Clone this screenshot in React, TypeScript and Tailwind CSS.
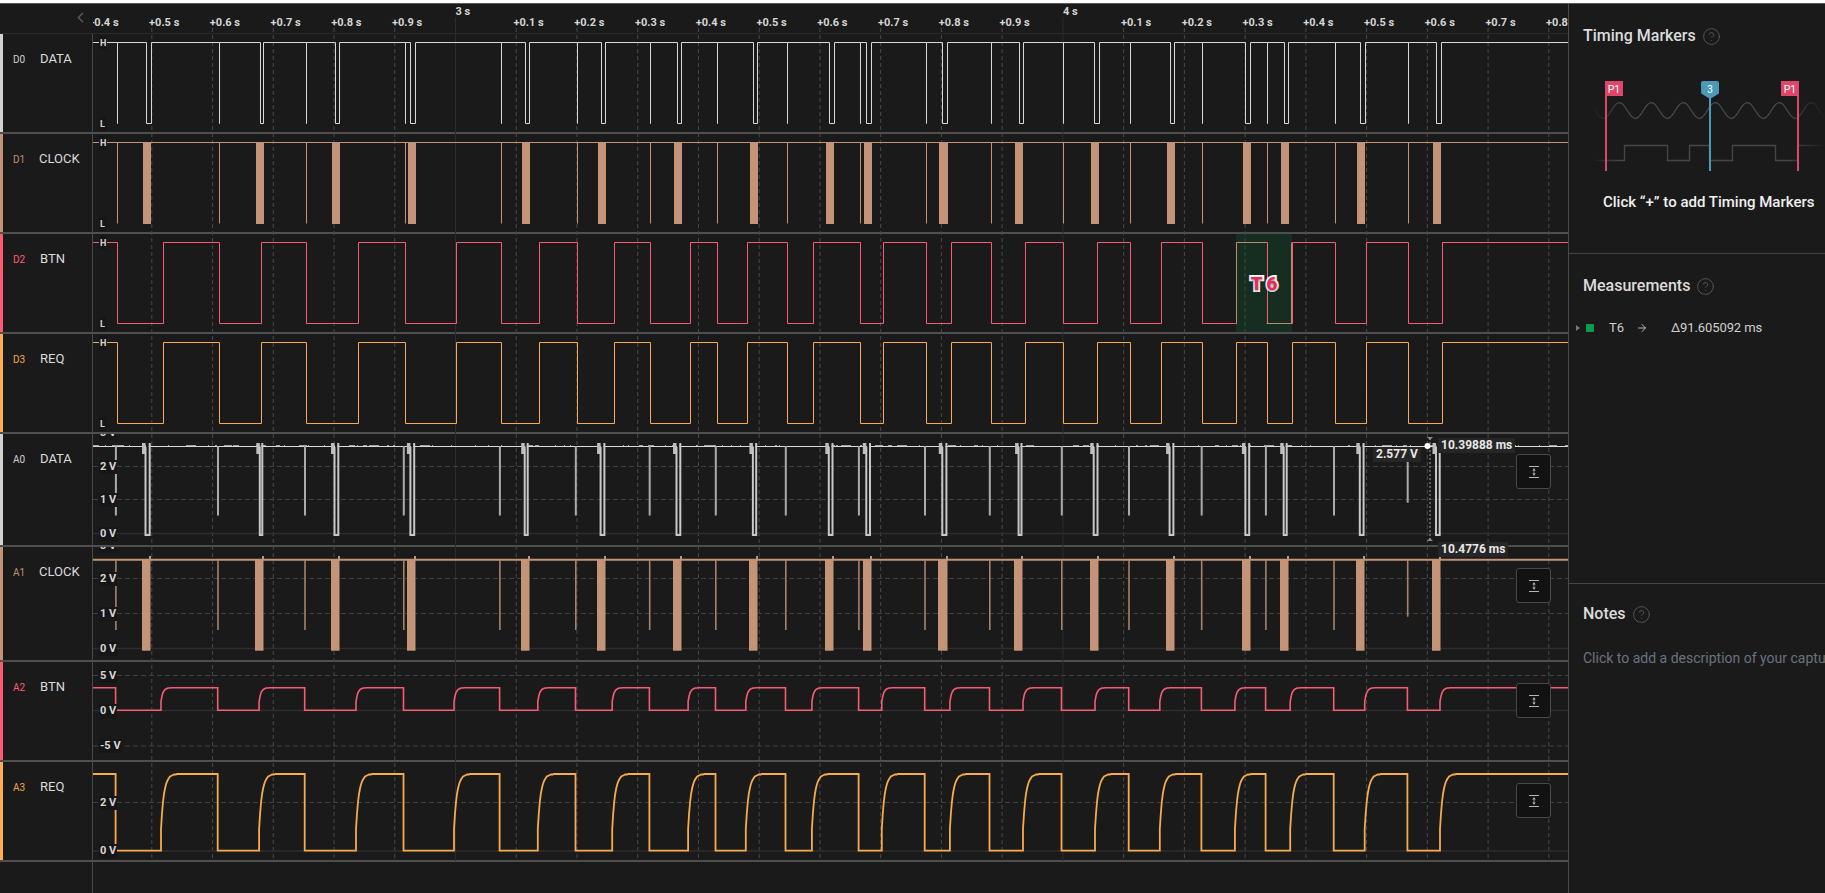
import type { ReactNode } from 'react';
import { ChevronLeft, CircleHelp, ArrowRight } from 'lucide-react';

// everything below is in page pixels, the row svgs use a viewBox that keeps them that way
const CHART_LEFT = 93;
const CHART_WIDTH = 1475;
const CHART_RIGHT = CHART_LEFT + CHART_WIDTH;

// BTN / REQ edges, alternating fall, rise
const EDGES = [
  116.6, 162.5, 218.7, 260.6, 305.7, 357.5, 404.5, 455.5, 500.6, 539.3, 576.5, 613.7, 650.4, 689.6, 716.5, 747.3,
  786.5, 813.4, 859.6, 883.3, 925.7, 951.4, 990.5, 1024.5, 1062.5, 1096.5, 1129.7, 1161.3, 1202.4, 1236.4, 1266.6,
  1291.7, 1334.7, 1366.2, 1408.4, 1441.5,
];
const THIN = EDGES.filter((_, i) => i % 2 === 0);
const PULSES: [number, number][] = [
  [145.5, 150.7], [259.8, 263.3], [334.5, 339.3], [410.4, 415.2], [524.7, 528.7], [600.6, 605.4], [676.5, 681.3],
  [752.9, 757.2], [828.8, 833.5], [866.3, 871], [942.3, 947.4], [1018.6, 1022.5], [1093.7, 1098.5], [1169.6, 1174.4],
  [1245.4, 1250.2], [1283.7, 1287.7], [1359.8, 1364.6], [1436, 1440.7],
];
const BARS: [number, number][] = [
  [143, 151], [256, 264], [332, 340], [408, 416], [522, 530], [598, 606], [674, 682], [750, 758], [826, 834],
  [864, 872], [939, 948], [1015, 1023], [1091, 1099], [1167, 1175], [1243, 1251], [1281, 1289], [1357, 1365], [1433, 1441],
];

const snap = (x: number) => Math.round(x) + 0.5;

function dataPath(hi: number, lo: number) {
  const events = [
    ...THIN.map((x) => ({ a: snap(x), b: snap(x) })),
    ...PULSES.map(([a, b]) => ({ a: snap(a), b: snap(b) })),
  ].sort((p, q) => p.a - q.a);
  let d = `M${CHART_LEFT} ${hi}`;
  for (const e of events) d += `L${e.a} ${hi}L${e.a} ${lo}L${e.b} ${lo}L${e.b} ${hi}`;
  return d + `L${CHART_RIGHT} ${hi}`;
}

function squarePath(hi: number, lo: number) {
  let d = `M${CHART_LEFT} ${hi}`;
  EDGES.forEach((x, i) => {
    const s = snap(x);
    d += i % 2 === 0 ? `L${s} ${hi}L${s} ${lo}` : `L${s} ${lo}L${s} ${hi}`;
  });
  return d + `L${CHART_RIGHT} ${hi}`;
}

function analogPath(hi: number, lo: number, tau: number, len: number) {
  let d = `M${CHART_LEFT} ${hi}`;
  EDGES.forEach((x, i) => {
    if (i % 2 === 0) {
      d += `L${x - 1} ${hi}L${x - 1} ${lo}`;
    } else {
      const r = x - 1.5;
      d += `L${r} ${lo}`;
      for (let dx = 0; dx <= len; dx++) {
        const y = Math.round((lo + (hi - lo) * (1 - Math.exp(-(dx + 1) / tau))) * 2) / 2;
        d += `L${r + dx} ${y}`;
      }
      d += `L${r + len + 1} ${hi}`;
    }
  });
  return d + `L${CHART_RIGHT} ${hi}`;
}

function noise(y: number) {
  let d = '';
  let x = CHART_LEFT;
  let seed = 7;
  while (x < CHART_RIGHT) {
    seed = (seed * 137 + 31) % 251;
    const len = 1 + (seed % 5);
    if (seed % 3 === 0) d += `M${x} ${y}h${len * 2}`;
    else if (seed % 3 === 1) d += `M${x} ${y}h1`;
    x += len + 3 + (seed % 7);
  }
  return d;
}

function HLine({ y, solid }: { y: number; solid?: boolean }) {
  return (
    <line
      x1={CHART_LEFT}
      x2={CHART_RIGHT}
      y1={y}
      y2={y}
      stroke={solid ? '#2e2e2e' : '#404040'}
      strokeWidth={solid ? 1.5 : 1}
      strokeDasharray={solid ? undefined : '5 3'}
    />
  );
}

const A0Trace = (
  <>
    <HLine y={466.5} />
    <HLine y={499.5} />
    <HLine y={533.5} solid />
    <path d={noise(445.5)} stroke="#a0a0a0" strokeWidth={1} fill="none" />
    <line x1={CHART_LEFT} x2={CHART_RIGHT} y1={446.5} y2={446.5} stroke="#dcdcdc" strokeWidth={1} />
    {THIN.map((x) => (
      <line key={x} x1={x - 0.7} x2={x - 0.7} y1={446} y2={Math.round(x) === 1408 ? 502.7 : 515.5} stroke="#ababab" strokeWidth={2} />
    ))}
    {PULSES.map(([a, b]) => (
      <g key={a}>
        <rect x={a + 0.5} y={444} width={b - a - 2.5} height={5} fill="#1a1a1a" />
        <rect x={a - 3.5} y={443} width={3.5} height={11} fill="#bdbdbd" />
        <path d={`M${a} 447V535H${b - 1}V443`} stroke="#c8c8c8" strokeWidth={2} fill="none" />
      </g>
    ))}
  </>
);

const A1Trace = (
  <>
    <HLine y={578.5} />
    <HLine y={613.5} />
    <HLine y={648.5} solid />
    <line x1={CHART_LEFT} x2={CHART_RIGHT} y1={559.7} y2={559.7} stroke="#c39478" strokeWidth={2} />
    {THIN.map((x) => (
      <line key={x} x1={x - 0.7} x2={x - 0.7} y1={560} y2={Math.round(x) === 1408 ? 616.7 : 630} stroke="#a5836d" strokeWidth={1.6} />
    ))}
    {BARS.map(([a, b]) => (
      <g key={a}>
        <rect x={a - 1} y={560} width={b - a + 0.5} height={90.7} fill="#c39478" />
        <rect x={b - 2} y={556} width={2} height={4} fill="#c39478" />
      </g>
    ))}
  </>
);

type Row = {
  id: string;
  name: string;
  nameClass?: string;
  top: number;
  h: number;
  rowClass: string;
  strip: string;
  idColor: string;
  axis: { t: string; y: number }[];
  trace: ReactNode;
  scaleBtn?: string;
};

const digitalAxis = (top: number) => [
  { t: 'H', y: top + 8.5 },
  { t: 'L', y: top + 90 },
];

const ROWS: Row[] = [
  {
    id: 'D0', name: 'DATA', top: 34, h: 98, rowClass: 'h-[100px]', strip: 'bg-[#d2d2d2]', idColor: 'text-[#cfcfcf]',
    axis: digitalAxis(34),
    trace: <path d={dataPath(42.5, 123.5)} stroke="#d8d8d8" fill="none" />,
  },
  {
    id: 'D1', name: 'CLOCK', nameClass: '-ml-px', top: 134, h: 98, rowClass: 'h-[100px]', strip: 'bg-[#c39478]', idColor: 'text-[#c08f72]',
    axis: digitalAxis(134),
    trace: (
      <>
        <path d={THIN.map((x) => `M${snap(x)} 142V223.5`).join('')} stroke="#c39478" fill="none" />
        <line x1={CHART_LEFT} x2={CHART_RIGHT} y1={142.5} y2={142.5} stroke="#c39478" />
        {BARS.map(([a, b]) => (
          <rect key={a} x={a} y={142} width={b - a} height={82} fill="#c39478" />
        ))}
      </>
    ),
  },
  {
    id: 'D2', name: 'BTN', top: 234, h: 98, rowClass: 'h-[100px]', strip: 'bg-[#ff5a72]', idColor: 'text-[#ff5a72]',
    axis: digitalAxis(234),
    trace: (
      <>
        <rect x={1236} y={234} width={56} height={98} fill="#105635" fillOpacity={0.32} />
        <path d={squarePath(242.5, 323.5)} stroke="#f75c73" fill="none" />
        {/* trace takes the marker's tint along the T6 span */}
        <path d="M1236.5 323.500V242.500H1266.500M1266.500 323.500H1291.500V242.500" stroke="#bd8a73" fill="none" />
      </>
    ),
  },
  {
    id: 'D3', name: 'REQ', top: 334, h: 98, rowClass: 'h-[100px]', strip: 'bg-[#ffad4d]', idColor: 'text-[#f0a64c]',
    axis: digitalAxis(334),
    trace: <path d={squarePath(342.5, 423.5)} stroke="#f8aa4c" fill="none" />,
  },
  {
    id: 'A0', name: 'DATA', top: 434, h: 111, rowClass: 'h-[113px]', strip: 'bg-[#d2d2d2]', idColor: 'text-[#cfcfcf]',
    axis: [
      { t: '3 V', y: 433 },
      { t: '2 V', y: 466.5 },
      { t: '1 V', y: 499.5 },
      { t: '0 V', y: 533.5 },
    ],
    trace: A0Trace,
    scaleBtn: 'top-[20px]',
  },
  {
    id: 'A1', name: 'CLOCK', nameClass: '-ml-px', top: 547, h: 113, rowClass: 'h-[115px]', strip: 'bg-[#c39478]', idColor: 'text-[#c08f72]',
    axis: [
      { t: '3 V', y: 546 },
      { t: '2 V', y: 579 },
      { t: '1 V', y: 613.5 },
      { t: '0 V', y: 648.5 },
    ],
    trace: A1Trace,
    scaleBtn: 'top-[21px]',
  },
  {
    id: 'A2', name: 'BTN', top: 662, h: 98, rowClass: 'h-[100px]', strip: 'bg-[#ff5a72]', idColor: 'text-[#ff5a72]',
    axis: [
      { t: '5 V', y: 675.5 },
      { t: '0 V', y: 710.5 },
      { t: '-5 V', y: 746 },
    ],
    trace: (
      <>
        <HLine y={675.5} />
        <HLine y={710.5} solid />
        <HLine y={746} />
        <path d={analogPath(687.7, 710.3, 2, 9)} stroke="#f75c73" strokeWidth={1.6} fill="none" />
      </>
    ),
    scaleBtn: 'top-[21px]',
  },
  {
    id: 'A3', name: 'REQ', top: 762, h: 98, rowClass: 'h-[100px]', strip: 'bg-[#ffad4d]', idColor: 'text-[#f0a64c]',
    axis: [
      { t: '2 V', y: 802.5 },
      { t: '0 V', y: 851 },
    ],
    trace: (
      <>
        <HLine y={802.5} />
        <HLine y={851} solid />
        <path d={analogPath(774, 850.7, 3, 15)} stroke="#f8aa4c" strokeWidth={1.8} fill="none" />
      </>
    ),
    scaleBtn: 'top-[21px]',
  },
];

const TICKS = Array.from({ length: 25 }, (_, i) => {
  const x = 455.5 + 60.74 * (i - 6);
  const tenth = (i + 4) % 10;
  return { i, x, whole: tenth === 0, label: tenth === 0 ? `${Math.round(2.4 + i / 10)} s` : `+0.${tenth} s` };
});

function ScaleButton({ top }: { top: string }) {
  return (
    <div className={`absolute right-[17px] ${top} flex h-[35px] w-[35px] items-center justify-center rounded-[3px] border border-[#484848] bg-[#121212]`}>
      <svg width="12" height="14" viewBox="0 0 12 14" fill="none">
        <path d="M1 1.5h10M1 12.5h10" stroke="#b5b5b5" />
        <path d="M6 3.5v7" stroke="#8a8a8a" />
        <path d="M4.2 5.5 6 3.5l1.8 2zM4.2 8.5 6 10.5l1.8-2z" fill="#b5b5b5" />
      </svg>
    </div>
  );
}

function TimingDiagram() {
  let wave = '';
  for (let x = 1590; x <= 1825; x += 2) {
    wave += `${x === 1590 ? 'M' : 'L'}${x} ${110.5 - 8 * Math.cos((2 * Math.PI * (x - 1619.3)) / 32)}`;
  }
  return (
    <svg width="256" height="96" viewBox="1569 78 256 96" className="block">
      <defs>
        <linearGradient id="fade" gradientUnits="userSpaceOnUse" x1="1592" x2="1825" y1="0" y2="0">
          <stop offset="0" stopColor="#464646" stopOpacity="0" />
          <stop offset="0.12" stopColor="#464646" />
          <stop offset="0.84" stopColor="#464646" />
          <stop offset="1" stopColor="#464646" stopOpacity="0.05" />
        </linearGradient>
      </defs>
      <path d={wave} stroke="url(#fade)" strokeWidth="1.3" fill="none" />
      <path d="M1595 160.5H1624.5V145.5H1667.5V160.5H1689.5V145.5H1709.5V160.5H1732.5V145.5H1775.5V160.5H1797.5V145.5H1825" stroke="url(#fade)" strokeWidth="1.3" fill="none" />
      <rect x="1605" y="81" width="18" height="15" fill="#e0456a" />
      <rect x="1605" y="81" width="2" height="90" fill="#e0456a" />
      <text x="1614" y="92.5" fill="#fff" fontSize="10.5" textAnchor="middle">P1</text>
      <rect x="1781" y="81" width="18" height="15" fill="#e0456a" />
      <rect x="1797" y="81" width="2" height="90" fill="#e0456a" />
      <text x="1790" y="92.5" fill="#fff" fontSize="10.5" textAnchor="middle">P1</text>
      <path d="M1701 83q0-2 2-2h14q2 0 2 2v10.500l-8.900 5.500-8.900-5.500z" fill="#4a9ab8" />
      <rect x="1709" y="95" width="2" height="76" fill="#4a9ab8" />
      <text x="1710" y="92.500" fill="#fff" fontSize="10" textAnchor="middle">3</text>
    </svg>
  );
}

function PanelHeading({ title }: { title: string }) {
  return (
    <div className="flex h-5 items-center gap-[6px] pl-[14px]">
      <span className="text-[16px] font-medium text-[#dcdcdc]">{title}</span>
      <CircleHelp size={19} strokeWidth={1.1} className="text-[#5a5a5a]" />
    </div>
  );
}

export default function App() {
  return (
    <div className="flex h-screen w-screen flex-col overflow-hidden bg-[#1a1a1a] font-['Roboto',sans-serif]">
      <div className="h-[4px] shrink-0 border-b border-[#5a5a5a] bg-white" />
      <div className="flex min-h-0 flex-1">
        {/* capture area */}
        <div className="relative w-[1568px] shrink-0">
          <svg width={CHART_WIDTH} height="889" viewBox={`${CHART_LEFT} 4 ${CHART_WIDTH} 889`} className="absolute left-[93px] top-0">
            {TICKS.filter((t) => t.i > 0).map((t) => (
              <line
                key={t.i}
                x1={t.x}
                x2={t.x}
                y1={t.whole ? 17 : 28}
                y2={861}
                stroke={t.whole ? '#2c2c2c' : '#494949'}
                strokeDasharray={t.whole ? undefined : '4 3'}
              />
            ))}
          </svg>

          <div className="flex h-[30px] border-b border-[#2a2a2a]">
            <div className="flex w-[93px] shrink-0 items-center justify-end pb-[2px] pr-[4px] text-[#5a5a5a]">
              <ChevronLeft size={17} strokeWidth={2} />
            </div>
            <div className="relative flex-1 overflow-hidden">
              {TICKS.map((t) => (
                <span
                  key={t.i}
                  className={`absolute whitespace-nowrap text-[11px] font-bold leading-[14px] text-[#d6d6d6] ${t.whole ? 'top-[1px]' : 'top-[12px]'}`}
                  style={{ left: t.x - CHART_LEFT - (t.whole ? 0 : 2.7) }}
                >
                  {t.label}
                </span>
              ))}
            </div>
          </div>

          {ROWS.map((r) => (
            <div key={r.id} className={`flex border-b-2 border-[#4f4f4f] ${r.rowClass}`}>
              <div className="flex w-[93px] shrink-0 border-r border-[#4a4a4a]">
                <div className={`w-[3px] shrink-0 ${r.strip}`} />
                <div className="flex items-baseline self-start pl-[10px] pt-[17px]">
                  <span className={`w-[27px] text-[10px] ${r.idColor}`}>{r.id}</span>
                  <span className={`text-[13px] leading-[16px] text-[#dcdcdc] ${r.nameClass ?? ''}`}>{r.name}</span>
                </div>
              </div>
              <div className="relative flex-1 overflow-hidden">
                <svg width={CHART_WIDTH} height={r.h} viewBox={`${CHART_LEFT} ${r.top} ${CHART_WIDTH} ${r.h}`} className="block">
                  {r.trace}
                </svg>
                {r.id === 'D2' && (
                  <div className="absolute bottom-0 left-[1143px] top-0 flex w-[56px] items-center justify-center">
                    <span className="pl-[4px] text-[19px] font-bold leading-none tracking-[4px] text-[#f0245e] [-webkit-text-stroke:4px_white] [paint-order:stroke_fill] [text-shadow:0_1px_3px_rgba(0,0,0,0.6)]">
                      T6
                    </span>
                  </div>
                )}
                {r.axis.map((a) => (
                  <span
                    key={a.t}
                    className={`absolute left-[6px] bg-[#161616] px-px font-bold leading-[14px] text-[#d6d6d6] ${r.id[0] === 'D' ? 'text-[9px]' : 'text-[11px]'}`}
                    style={{ top: a.y - r.top - 7 }}
                  >
                    {a.t}
                  </span>
                ))}
                {r.scaleBtn && <ScaleButton top={r.scaleBtn} />}
              </div>
            </div>
          ))}

          <div className="h-full w-[93px] border-r border-[#4a4a4a]" />

          {/* A0 cursor readouts */}
          <svg width="14" height="110" viewBox="1423 434 14 110" className="absolute left-[1423px] top-[430px]">
            <line x1="1430" x2="1430" y1="438" y2="541" stroke="#9a9a9a" strokeDasharray="2 2" />
            <path d="M1427 437h6l-3 3zM1427 541h6l-3-3z" fill="#8c8c8c" />
            <circle cx="1427.500" cy="446" r="3" fill="#fff" />
          </svg>
          <span className="absolute left-[1373px] top-[443px] bg-[#262626] px-[3px] text-[12px] font-bold leading-[15px] text-[#e8e8e8]">2.577 V</span>
          <span className="absolute left-[1438px] top-[434px] bg-[#262626] px-[3px] text-[12px] font-bold leading-[15px] text-[#e8e8e8]">10.39888 ms</span>
          <span className="absolute left-[1438px] top-[538px] bg-[#262626] px-[3px] text-[12px] font-bold leading-[15px] text-[#e8e8e8]">10.4776 ms</span>
        </div>

        {/* side panel */}
        <div className="min-w-0 flex-1 overflow-hidden border-l border-[#4a4a4a]">
          <div className="h-[250px] border-b border-[#444] pt-[22px]">
            <PanelHeading title="Timing Markers" />
            <div className="mt-[32px]">
              <TimingDiagram />
            </div>
            <p className="mt-[18px] whitespace-nowrap pl-[34px] text-[15px] font-medium leading-5 text-[#f0f0f0]">
              Click “+” to add Timing Markers
            </p>
          </div>
          <div className="h-[330px] border-b border-[#444] pt-[22px]">
            <PanelHeading title="Measurements" />
            <div className="mt-[24px] flex h-4 items-center text-[13px] text-[#cfcfcf]">
              <svg width="4" height="6" viewBox="0 0 4 6" className="ml-[7px]">
                <path d="M0 0l4 3-4 3z" fill="#777" />
              </svg>
              <span className="ml-[6px] h-2 w-2 rounded-[1px] bg-[#0a9b50]" />
              <span className="ml-[15px] w-[14px]">T6</span>
              <ArrowRight size={12} className="ml-[13px] text-[#b5b5b5]" />
              <span className="ml-[23px] whitespace-nowrap tracking-[-0.1px]">Δ91.605092 ms</span>
            </div>
          </div>
          <div className="pt-[20px]">
            <PanelHeading title="Notes" />
            <p className="mt-[24px] whitespace-nowrap pl-[14px] text-[14px] leading-5 text-[#6b7280]">
              Click to add a description of your capture
            </p>
          </div>
        </div>
      </div>
    </div>
  );
}
